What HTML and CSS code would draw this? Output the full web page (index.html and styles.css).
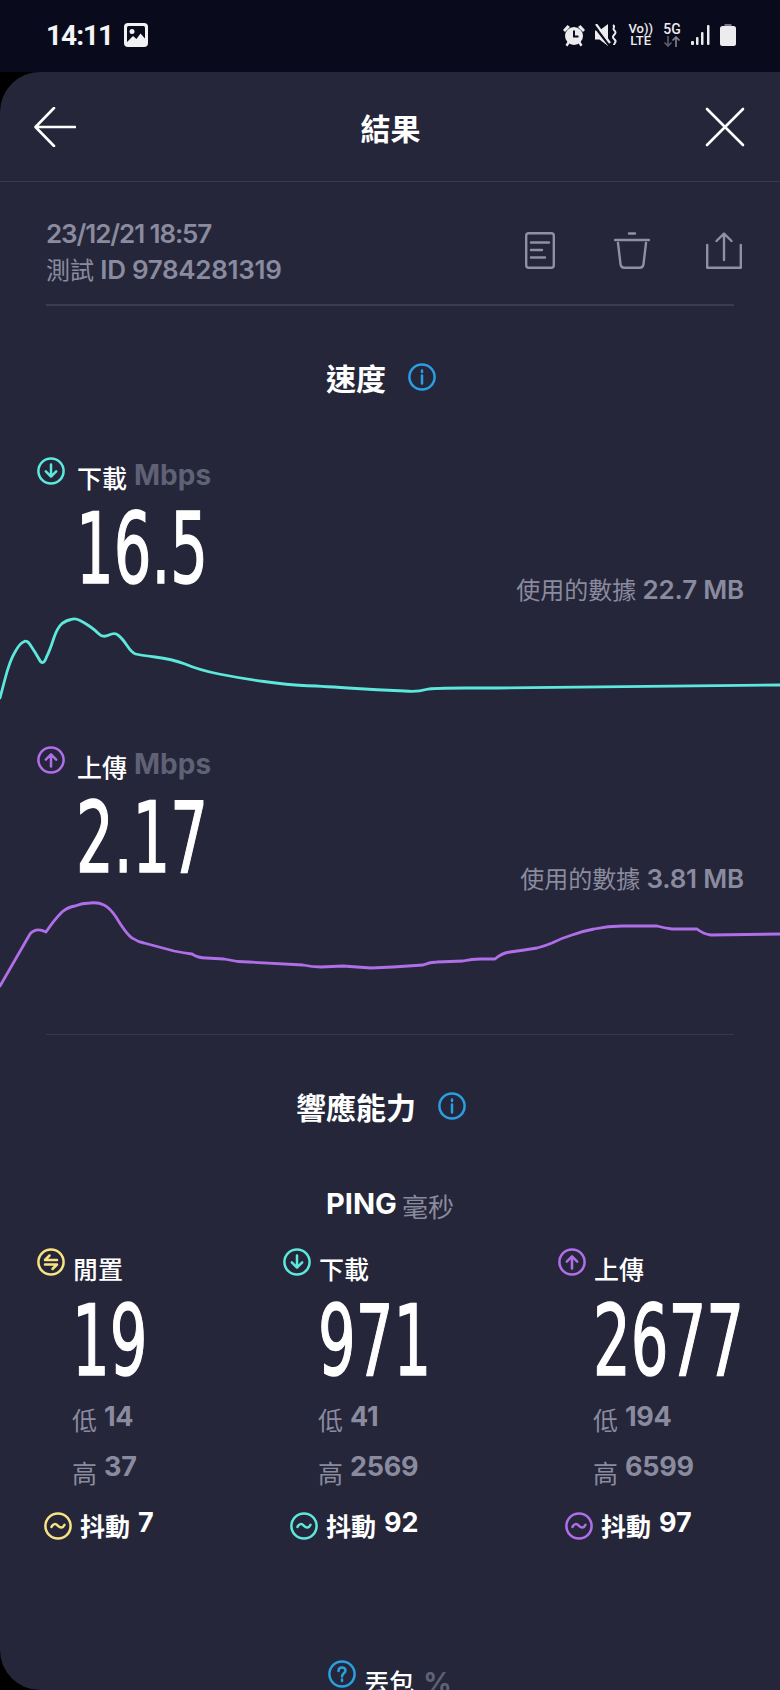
FILE: index.html
```html
<!DOCTYPE html>
<html lang="zh-Hant">

<head>
  <meta charset="UTF-8">
  <meta name="viewport" content="width=device-width, initial-scale=1.0">
  <title>結果</title>
  <link rel="stylesheet" href="styles.css">
</head>

<body>
  <!-- shared icons -->
  <svg class="defs" width="0" height="0">
    <symbol id="i-down" viewBox="0 0 28 28"><circle cx="14" cy="14" r="12.6"/><path d="M14 7.500v12M8.800 14.400l5.200 5.200 5.200-5.200"/></symbol>
    <symbol id="i-up" viewBox="0 0 28 28"><circle cx="14" cy="14" r="12.6"/><path d="M14 20.500v-12M8.800 13.600l5.200-5.200 5.200 5.200"/></symbol>
    <symbol id="i-idle" viewBox="0 0 28 28"><circle cx="14" cy="14" r="12.6"/><path d="M20 12H8l4.500-4.500M8 16.500h12L15.500 21"/></symbol>
    <symbol id="i-wave" viewBox="0 0 28 28"><circle cx="14" cy="14" r="12.6"/><path d="M7.500 15c1.500-3.500 4-3.800 6.500-1.200s5 2.300 6.500-1"/></symbol>
    <symbol id="i-info" viewBox="0 0 28 28"><circle cx="14" cy="14" r="12.6"/><path d="M14 12.500v8M14 7.500v1.500"/></symbol>
    <symbol id="i-help" viewBox="0 0 28 28"><circle cx="14" cy="14" r="12.6"/><path d="M10.500 11c0-2.200 1.600-3.600 3.500-3.600s3.500 1.300 3.500 3.200c0 2.800-3.500 2.700-3.500 5.900M14 19.500v1.500"/></symbol>
  </svg>

  <!-- Status bar -->
  <div class="status-bar">
    <span class="clock">14:11</span>
    <svg class="pic-icon" width="24" height="24" viewBox="0 0 24 24">
      <rect width="24" height="24" rx="4" fill="#f2f2f4"/>
      <rect x="3" y="3" width="18" height="18" rx="1.500" fill="#0a0b1c"/>
      <circle cx="8" cy="8.500" r="2.500" fill="#f2f2f4"/>
      <path d="M3 19l6-6 3.500 3 4-5.500 4.500 5V21H3z" fill="#f2f2f4"/>
    </svg>
    <div class="status-right">
      <svg width="22" height="23" viewBox="0 0 22 23" fill="#ececee">
        <circle cx="11" cy="12" r="9"/>
        <path d="M0 6l4.500-5L7 3 2 8zM22 6l-4.500-5L15 3l5 5zM2.500 21l2.500-4 2 1.500-2.500 4zM19.500 21L17 17l-2 1.500 2.500 4z"/>
        <path d="M11 6.500v6h4.500" fill="none" stroke="#0a0b1c" stroke-width="2"/>
      </svg>
      <svg width="23" height="22" viewBox="0 0 23 22">
        <path d="M0 6.500h4.500L13 0v22l-8.500-6.500H0z" fill="#ececee"/>
        <path d="M0 3l14 18" stroke="#0a0b1c" stroke-width="2.400"/>
        <path d="M1 0l14 19" stroke="#ececee" stroke-width="2.200"/>
        <path d="M18 1c3 2-1 3 1 5s2 3 0 5-1 3 1 5-1 3-1 5" fill="none" stroke="#ececee" stroke-width="2"/>
      </svg>
      <div class="volte"><span>Vo))</span><span>LTE</span></div>
      <div class="net">
        <span>5G</span>
        <svg width="18" height="11" viewBox="0 0 18 11" fill="none" stroke-width="1.600">
          <path d="M5 0v10M1.500 6.500L5 10l3.500-3.500" stroke="#5e5f6c"/>
          <path d="M13 11V1M9.500 4.500L13 1l3.500 3.500" stroke="#85868f"/>
        </svg>
      </div>
      <svg width="19" height="22" viewBox="0 0 19 22" fill="#ececee">
        <rect x="0" y="17" width="3" height="4" rx="1"/>
        <rect x="5" y="13" width="2.500" height="8" rx="1"/>
        <rect x="10" y="8" width="2.500" height="13" rx="1"/>
        <rect x="16" y="1" width="2.500" height="20" rx="1"/>
      </svg>
      <svg width="16" height="22" viewBox="0 0 16 22">
        <rect x="4.500" y="0" width="7" height="3" fill="#77787f"/>
        <rect x="0" y="2" width="16" height="20" rx="2.500" fill="#ececee"/>
      </svg>
    </div>
  </div>

  <!-- Result card -->
  <div class="card">
    <div class="top-bar">
      <svg width="42" height="40" viewBox="0 0 42 40" fill="none" class="line-icon">
        <path d="M41 20H2M20 1L1.500 20 20 39"/>
      </svg>
      <h1>結果</h1>
      <svg width="40" height="40" viewBox="0 0 40 40" fill="none" class="line-icon">
        <path d="M2 2l36 36M38 2L2 38"/>
      </svg>
    </div>

    <div class="meta">
      <div class="meta-text">
        <div class="meta-date">23/12/21 18:57</div>
        <div class="meta-id"><span class="cjk-thin">測試</span> ID 9784281319</div>
      </div>
      <div class="meta-icons">
        <svg width="30" height="37" viewBox="0 0 30 37" fill="none">
          <rect x="1.200" y="1.200" width="27.600" height="34.600" rx="2.500"/>
          <path d="M6 10.500h18M6 18h11M6 25.500h14"/>
        </svg>
        <svg class="trash" width="36" height="37" viewBox="0 0 36 37" fill="none">
          <path d="M15 1.500h6M1 8h34M4 11l2.500 21c.3 2.500 1.500 3.800 4 3.800h15c2.500 0 3.700-1.300 4-3.800L32 11"/>
        </svg>
        <svg width="36" height="37" viewBox="0 0 36 37" fill="none">
          <path d="M1.200 13v22.800h33.600V13M18 28V2M10.500 9L18 1.500 25.500 9"/>
        </svg>
      </div>
    </div>

    <div class="section-title first">
      <span>速度</span>
      <svg class="ring blue"><use href="#i-info"/></svg>
    </div>

    <!-- Download -->
    <div class="speed down-block">
      <div class="head">
        <svg class="ring cyan"><use href="#i-down"/></svg>
        <span class="label">下載</span>
        <span class="unit">Mbps</span>
      </div>
      <div class="speed-row">
        <span class="big">16.5</span>
        <span class="used"><span class="cjk-thin">使用的數據</span> 22.7 MB</span>
      </div>
      <svg class="chart" width="780" height="90" viewBox="0 610 780 90" fill="none">
        <path class="cyan" d="M0 698L5 679Q10 660 15 652Q20 643 23.500 642Q27 639 31 646Q35 652 39 659Q43 667 46.500 657Q50 650 53.500 639Q57 628 62 623.500Q67 620 71 619.500Q75 618 80 620.500Q85 623 90 626.500Q95 630 99 634Q103 638 109 635Q115 632 118.500 635.500Q122 638 127 645.500Q132 653 135.500 654Q139 655 155 657Q172 659 185 664Q199 670 219 674Q239 678 264 681.500Q289 685 303 685.500Q318 686 348 688Q378 690 405 691Q418 692 426 689.500Q433 688 465 688L498 688L780 685"/>
      </svg>
    </div>

    <!-- Upload -->
    <div class="speed up-block">
      <div class="head">
        <svg class="ring purple"><use href="#i-up"/></svg>
        <span class="label">上傳</span>
        <span class="unit">Mbps</span>
      </div>
      <div class="speed-row">
        <span class="big">2.17</span>
        <span class="used"><span class="cjk-thin">使用的數據</span> 3.81 MB</span>
      </div>
      <svg class="chart" width="780" height="90" viewBox="0 900 780 90" fill="none">
        <path class="purple" d="M0 987L30 935Q36 928 46 933Q54 921 62 913Q68 908 75 907Q82 904 90 904Q98 903 104 906Q110 909 116 918Q128 938 134 940Q138 943 144 944L174 952Q184 954 192 955Q198 959 206 959L224 960Q236 963 249 963L303 966Q312 968 321 968L343 967L371 969L393 968L423 966Q430 963 437 963L463 962Q472 960 480 960L495 960Q502 954 510 953Q525 951 537 949Q545 947 552 944Q562 939 572 936Q583 932 594 930Q608 927 622 927L657 927Q664 929 672 930L697 930Q703 935 711 936L780 935"/>
      </svg>
    </div>

    <div class="rule"></div>

    <div class="section-title second">
      <span>響應能力</span>
      <svg class="ring blue"><use href="#i-info"/></svg>
    </div>

    <div class="ping-title">
      <span class="ping-name">PING</span>
      <span class="ping-unit">毫秒</span>
    </div>

    <div class="ping-grid">
      <div class="ping-col">
        <div class="head">
          <svg class="ring yellow"><use href="#i-idle"/></svg>
          <span class="label">閒置</span>
        </div>
        <div class="big">19</div>
        <div class="stat low"><span class="stat-name">低</span><span class="stat-val">14</span></div>
        <div class="stat high"><span class="stat-name">高</span><span class="stat-val">37</span></div>
        <div class="jitter">
          <svg class="ring yellow"><use href="#i-wave"/></svg>
          <span class="label">抖動</span>
          <span class="jitter-val">7</span>
        </div>
      </div>

      <div class="ping-col">
        <div class="head">
          <svg class="ring cyan"><use href="#i-down"/></svg>
          <span class="label">下載</span>
        </div>
        <div class="big">971</div>
        <div class="stat low"><span class="stat-name">低</span><span class="stat-val">41</span></div>
        <div class="stat high"><span class="stat-name">高</span><span class="stat-val">2569</span></div>
        <div class="jitter">
          <svg class="ring cyan"><use href="#i-wave"/></svg>
          <span class="label">抖動</span>
          <span class="jitter-val">92</span>
        </div>
      </div>

      <div class="ping-col">
        <div class="head">
          <svg class="ring purple"><use href="#i-up"/></svg>
          <span class="label">上傳</span>
        </div>
        <div class="big">2677</div>
        <div class="stat low"><span class="stat-name">低</span><span class="stat-val">194</span></div>
        <div class="stat high"><span class="stat-name">高</span><span class="stat-val">6599</span></div>
        <div class="jitter">
          <svg class="ring purple"><use href="#i-wave"/></svg>
          <span class="label">抖動</span>
          <span class="jitter-val">97</span>
        </div>
      </div>
    </div>

    <div class="loss head">
      <svg class="ring blue"><use href="#i-help"/></svg>
      <span class="label">丟包</span>
      <span class="unit">%</span>
    </div>
  </div>
</body>

</html>
```

FILE: styles.css
```css
/* Page */
body {
  margin: 0;
  width: 780px;
  height: 1690px;
  overflow: hidden;
  background-color: #000;
  font-family: Inter, "Noto Sans CJK TC", sans-serif;
  color: #fff;
}

.defs {
  display: block;
  height: 0;
}

/* Status bar */
.status-bar {
  display: flex;
  align-items: center;
  height: 72px;
  padding: 0 44px 2px 46px;
  box-sizing: border-box;
  background-color: #090a1b;
}

.clock {
  width: 78px;
  font-family: Roboto, sans-serif;
  font-size: 28px;
  font-weight: 700;
  letter-spacing: -1px;
  color: #f4f4f6;
}

.status-right {
  display: flex;
  align-items: center;
  margin-left: auto;
  gap: 10px;
}

.volte,
.net {
  display: flex;
  flex-direction: column;
  align-items: center;
  font-family: Roboto, sans-serif;
  font-size: 13px;
  font-weight: 500;
  line-height: 12px;
  color: #ececee;
}

.net span {
  font-size: 14px;
  margin-bottom: 1px;
}

/* Card */
.card {
  height: 1618px;
  overflow: hidden;
  background-color: #25263a;
  border-top-left-radius: 40px;
  border-bottom-left-radius: 40px;
}

.top-bar {
  display: flex;
  align-items: center;
  justify-content: space-between;
  height: 110px;
  padding: 0 35px 0 34px;
  box-sizing: border-box;
  border-bottom: 1px solid #383a4e;
}

.line-icon {
  stroke: #fff;
  stroke-width: 2.600;
  stroke-linecap: round;
  stroke-linejoin: round;
}

h1 {
  margin: 4px 0 0;
  font-size: 30px;
  font-weight: 700;
  line-height: 40px;
}

/* Date and test id */
.meta {
  display: flex;
  align-items: flex-start;
  justify-content: space-between;
  height: 124px;
  margin: 0 46px;
  padding-top: 34px;
  box-sizing: border-box;
  border-bottom: 2px solid #3a3c50;
}

.meta-text {
  font-size: 26px;
  font-weight: 600;
  line-height: 36px;
  color: #8a8b9f;
}

.meta-date {
  letter-spacing: -1.100px;
}

.meta-id {
  letter-spacing: -0.300px;
}

.cjk-thin {
  font-size: 24px;
  font-weight: 400;
  letter-spacing: 0;
}

.meta-icons {
  display: flex;
  margin-right: -8px;
  padding-top: 16px;
  stroke: #8f90a4;
  stroke-width: 2.400;
  stroke-linecap: round;
  stroke-linejoin: round;
}

.trash {
  margin: 0 56px 0 59px;
}

/* Section titles */
.section-title {
  display: flex;
  align-items: center;
  justify-content: center;
  gap: 22px;
  height: 40px;
  padding-right: 18px;
  font-size: 30px;
  font-weight: 700;
}

.section-title.first {
  margin-top: 51px;
}

.section-title.second {
  margin-top: 51px;
}

/* Rings */
.ring {
  width: 28px;
  height: 28px;
  flex: none;
  fill: none;
  stroke: currentColor;
  stroke-width: 2.500;
  stroke-linecap: round;
  stroke-linejoin: round;
}

.cyan {
  color: #5de8dc;
  stroke: #5de8dc;
}

.purple {
  color: #b06fe8;
  stroke: #b06fe8;
}

.yellow {
  color: #f7e382;
}

.blue {
  color: #2a9fe0;
}

/* Speed blocks */
.head {
  display: flex;
  align-items: flex-start;
  height: 35px;
  padding-left: 37px;
}

.head .label {
  margin-left: 12px;
  margin-top: 7px;
}

.label {
  font-size: 25px;
  font-weight: 500;
  line-height: 30px;
}

.unit {
  margin-left: 7px;
  margin-top: 3px;
  font-size: 28px;
  font-weight: 700;
  line-height: 30px;
  color: #5f6175;
}

.down-block {
  margin-top: 60px;
}

.up-block {
  margin-top: 46px;
}

.speed-row {
  display: flex;
  align-items: flex-start;
  justify-content: space-between;
  height: 97px;
  margin-top: 17px;
  padding: 0 36px 0 76px;
}

/* no condensed font here, so squeeze DejaVu and thicken it with a stroke */
.big {
  width: 124px;
  font-family: "DejaVu Sans", sans-serif;
  font-size: 98px;
  line-height: 80px;
  white-space: nowrap;
  -webkit-text-stroke: 1.500px #fff;
  transform: scaleX(0.605);
  transform-origin: left center;
}

.used {
  align-self: flex-end;
  font-size: 26px;
  font-weight: 600;
  line-height: 30px;
  letter-spacing: -0.200px;
  color: #8a8b9f;
  white-space: nowrap;
}

.chart {
  display: block;
  margin-top: 4px;
  stroke-width: 2.800;
  stroke-linecap: round;
  stroke-linejoin: round;
}

.rule {
  height: 1px;
  margin: 45px 46px 0;
  background-color: #36384c;
}

/* Ping */
.ping-title {
  display: flex;
  align-items: flex-start;
  justify-content: center;
  gap: 5px;
  height: 36px;
  margin-top: 60px;
  line-height: 36px;
}

.ping-name {
  font-size: 29px;
  font-weight: 700;
}

.ping-unit {
  margin-top: 4px;
  font-size: 26px;
  color: #8a8b9f;
}

.ping-grid {
  display: grid;
  grid-template-columns: 246px 275px 1fr;
  margin-top: 26px;
  padding-left: 37px;
}

.ping-col .head {
  padding-left: 0;
}

.ping-col .head .label {
  margin-left: 8px;
}

.ping-col .big {
  margin: 18px 0 0 35px;
}

.stat {
  display: flex;
  align-items: flex-start;
  gap: 7px;
  height: 30px;
  margin: 21px 0 0 35px;
  line-height: 30px;
  color: #8a8b9f;
}

.stat.high {
  margin-top: 23px;
}

.stat-name {
  margin-top: 4px;
  font-size: 25px;
}

.stat-val {
  font-size: 27px;
  font-weight: 700;
  letter-spacing: -0.300px;
}

.low .stat-val {
  margin-top: 0;
}

.high .stat-val {
  margin-top: -3px;
}

.jitter {
  display: flex;
  align-items: flex-start;
  height: 28px;
  margin: 27px 0 0 7px;
}

.jitter .label {
  margin-left: 8px;
  font-weight: 700;
}

.jitter-val {
  margin-left: 8px;
  margin-top: -4px;
  font-size: 27px;
  font-weight: 700;
  line-height: 30px;
}

/* Packet loss, cut off by the screen edge */
.loss {
  justify-content: center;
  margin-top: 120px;
  padding-left: 0;
  padding-right: 0;
}

.loss .label {
  margin-left: 8px;
  margin-top: 8px;
}

.loss .unit {
  margin-top: 8px;
  margin-left: 9px;
}
```
